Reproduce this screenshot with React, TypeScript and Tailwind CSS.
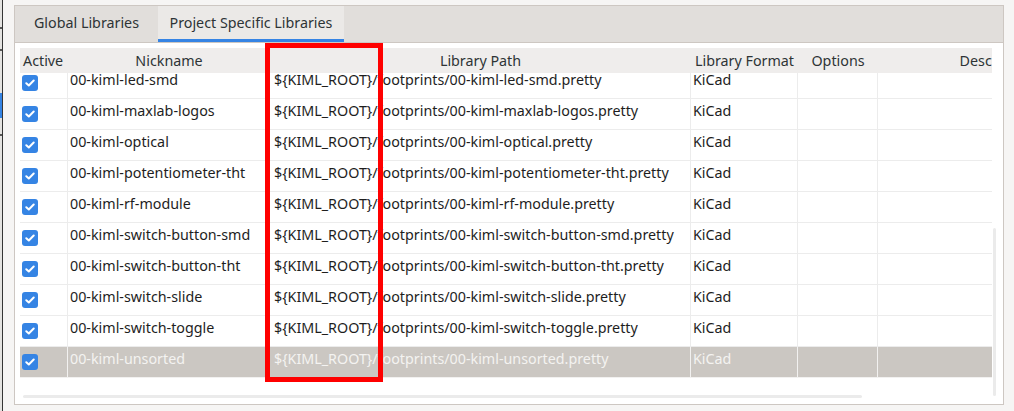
const libs = [
  'led-smd',
  'maxlab-logos',
  'optical',
  'potentiometer-tht',
  'rf-module',
  'switch-button-smd',
  'switch-button-tht',
  'switch-slide',
  'switch-toggle',
  'unsorted',
]

const Check = () => (
  <div className="w-4 h-4 rounded-[3px] bg-[#3584e4] flex items-center justify-center">
    <svg width="10" height="8" viewBox="0 0 10 8" fill="none">
      <path d="M1.3 4.2 L3.8 6.5 L8.7 1.5" stroke="white" strokeWidth="2" strokeLinecap="round" strokeLinejoin="round" />
    </svg>
  </div>
)

const App = () => {
  return (
    <div className="w-[1014px] h-[411px] bg-[#f6f5f4] flex overflow-hidden font-['Noto_Sans',sans-serif] text-[14.3px] text-[#1e1e1e]">
      {/* bit of the window behind */}
      <div className="w-[2px] h-full bg-[#e4e3e1] flex flex-col">
        <div className="h-[27px]" />
        <div className="h-[2px] bg-[#555]" />
        <div className="h-[20px]" />
        <div className="h-[2px] bg-[#555]" />
        <div className="h-[42px]" />
        <div className="h-[25px] bg-[#3584e4]" />
        <div className="h-[16px]" />
        <div className="h-[2px] bg-[#555]" />
      </div>
      <div className="w-[1px] h-full bg-[#353535]" />

      <div className="relative ml-[11px] mt-[5px] w-[990px] h-[400px] border border-[#cdc7c2] bg-white flex flex-col">
        {/* tabs */}
        <div className="h-[37px] bg-[#e1dedb] border-b border-[#cdc7c2] flex">
          <div className="w-[143px] flex items-center justify-center pb-[3px] text-[#2e3436]">Global Libraries</div>
          <div className="w-[186px] flex items-center justify-center bg-[#ebe9e7] border-b-[3px] border-[#3584e4] text-[#2e3436]">
            Project Specific Libraries
          </div>
        </div>

        {/* grid */}
        <div className="pt-[5px] pl-[5px]">
          <div className="w-[972px] overflow-hidden">
            <div className="h-[25px] bg-[#efedec] flex items-center whitespace-nowrap text-[#2e3436]">
              <div className="w-[48px] shrink-0 pl-[3px]">Active</div>
              <div className="w-[202px] shrink-0 text-center">Nickname</div>
              <div className="w-[421px] shrink-0 text-center">Library Path</div>
              <div className="w-[107px] shrink-0 text-center">Library Format</div>
              <div className="w-[80px] shrink-0 text-center">Options</div>
              <div className="w-[240px] shrink-0 text-center">Description</div>
            </div>
            <div className="h-[305px] overflow-hidden">
              <div className="-mt-[5px]">
                {libs.map((lib, i) => {
                  const sel = i === libs.length - 1
                  return (
                    <div
                      key={lib}
                      className={`h-[31px] flex whitespace-nowrap border-b ${sel ? 'bg-[#cbc7c2] text-[#f4f3f1] border-[#f2f1f0]' : 'border-[#ececec]'}`}
                    >
                      <div className={`w-[48px] shrink-0 flex items-center pl-[2px] border-r ${sel ? 'border-[#f2f1f0]' : 'border-[#ececec]'}`}>
                        <Check />
                      </div>
                      <div className={`w-[202px] shrink-0 pl-[2px] pt-[1px] border-r ${sel ? 'border-[#f2f1f0]' : 'border-[#ececec]'}`}>
                        00-kiml-{lib}
                      </div>
                      <div className={`w-[421px] shrink-0 pl-[4px] pt-[1px] border-r ${sel ? 'border-[#f2f1f0]' : 'border-[#ececec]'}`}>
                        {'${KIML_ROOT}'}/footprints/00-kiml-{lib}.pretty
                      </div>
                      <div className={`w-[107px] shrink-0 pl-[2px] pt-[1px] border-r ${sel ? 'border-[#f2f1f0]' : 'border-[#ececec]'}`}>
                        KiCad
                      </div>
                      <div className={`w-[80px] shrink-0 border-r ${sel ? 'border-[#f2f1f0]' : 'border-[#ececec]'}`} />
                      <div className="w-[240px] shrink-0" />
                    </div>
                  )
                })}
              </div>
            </div>
          </div>
        </div>

        {/* overlay scrollbars */}
        <div className="absolute left-[978px] top-[222px] w-[3px] h-[168px] rounded-full bg-[#ebebeb]" />
        <div className="absolute left-[8px] top-[389px] w-[839px] h-[3px] rounded-full bg-[#ebebeb]" />

        {/* highlight box */}
        <div className="absolute left-[250px] top-[37px] w-[118px] h-[339px] border-[5px] border-[#ff0000]" />
      </div>
    </div>
  )
}

export default App
